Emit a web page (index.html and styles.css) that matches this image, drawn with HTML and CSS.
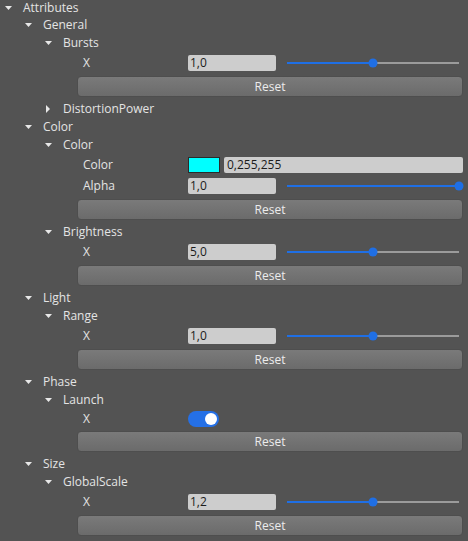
FILE: index.html
```html
<!DOCTYPE html>
<html>
<head>
<meta charset="utf-8">
<link rel="stylesheet" href="styles.css">
</head>
<body>
<div class="tree">
  <div class="hdr root"><span class="arr"><svg width="7" height="4" viewBox="0 0 7 4"><polygon points="0,0 7,0 3.5,4" fill="#e8e8e8"/></svg></span><span>Attributes</span></div>
  <div class="children">
    <div class="hdr"><span class="arr"><svg width="7" height="4" viewBox="0 0 7 4"><polygon points="0,0 7,0 3.5,4" fill="#e8e8e8"/></svg></span><span>General</span></div>
    <div class="children">
      <div class="hdr"><span class="arr"><svg width="7" height="4" viewBox="0 0 7 4"><polygon points="0,0 7,0 3.5,4" fill="#e8e8e8"/></svg></span><span>Bursts</span></div>
      <div class="children">
        <div class="props">
          <div class="row">
            <span class="lbl">X</span>
            <div class="val"><span class="field num">1,0</span><div class="slider"><div class="track" style="--p:50%"><span class="thumb"></span></div></div></div>
          </div>
          <div class="btn">Reset</div>
        </div>
      </div>
      <div class="hdr"><span class="arr"><svg width="4" height="8" viewBox="0 0 4 8" class="right"><polygon points="0,0 4,4 0,8" fill="#e8e8e8"/></svg></span><span>DistortionPower</span></div>
    </div>
    <div class="hdr"><span class="arr"><svg width="7" height="4" viewBox="0 0 7 4"><polygon points="0,0 7,0 3.5,4" fill="#e8e8e8"/></svg></span><span>Color</span></div>
    <div class="children">
      <div class="hdr"><span class="arr"><svg width="7" height="4" viewBox="0 0 7 4"><polygon points="0,0 7,0 3.5,4" fill="#e8e8e8"/></svg></span><span>Color</span></div>
      <div class="children">
        <div class="props">
          <div class="row">
            <span class="lbl">Color</span>
            <div class="val"><span class="swatch"></span><span class="field wide">0,255,255</span></div>
          </div>
          <div class="row">
            <span class="lbl">Alpha</span>
            <div class="val"><span class="field num">1,0</span><div class="slider"><div class="track" style="--p:100%"><span class="thumb"></span></div></div></div>
          </div>
          <div class="btn">Reset</div>
        </div>
      </div>
      <div class="hdr"><span class="arr"><svg width="7" height="4" viewBox="0 0 7 4"><polygon points="0,0 7,0 3.5,4" fill="#e8e8e8"/></svg></span><span>Brightness</span></div>
      <div class="children">
        <div class="props">
          <div class="row">
            <span class="lbl">X</span>
            <div class="val"><span class="field num">5,0</span><div class="slider"><div class="track" style="--p:50%"><span class="thumb"></span></div></div></div>
          </div>
          <div class="btn">Reset</div>
        </div>
      </div>
    </div>
    <div class="hdr"><span class="arr"><svg width="7" height="4" viewBox="0 0 7 4"><polygon points="0,0 7,0 3.5,4" fill="#e8e8e8"/></svg></span><span>Light</span></div>
    <div class="children">
      <div class="hdr"><span class="arr"><svg width="7" height="4" viewBox="0 0 7 4"><polygon points="0,0 7,0 3.5,4" fill="#e8e8e8"/></svg></span><span>Range</span></div>
      <div class="children">
        <div class="props">
          <div class="row">
            <span class="lbl">X</span>
            <div class="val"><span class="field num">1,0</span><div class="slider"><div class="track" style="--p:50%"><span class="thumb"></span></div></div></div>
          </div>
          <div class="btn">Reset</div>
        </div>
      </div>
    </div>
    <div class="hdr"><span class="arr"><svg width="7" height="4" viewBox="0 0 7 4"><polygon points="0,0 7,0 3.5,4" fill="#e8e8e8"/></svg></span><span>Phase</span></div>
    <div class="children">
      <div class="hdr"><span class="arr"><svg width="7" height="4" viewBox="0 0 7 4"><polygon points="0,0 7,0 3.5,4" fill="#e8e8e8"/></svg></span><span>Launch</span></div>
      <div class="children">
        <div class="props">
          <div class="row bool">
            <span class="lbl">X</span>
            <div class="val"><span class="toggle"><span class="knob"></span></span></div>
          </div>
          <div class="btn">Reset</div>
        </div>
      </div>
    </div>
    <div class="hdr"><span class="arr"><svg width="7" height="4" viewBox="0 0 7 4"><polygon points="0,0 7,0 3.5,4" fill="#e8e8e8"/></svg></span><span>Size</span></div>
    <div class="children">
      <div class="hdr"><span class="arr"><svg width="7" height="4" viewBox="0 0 7 4"><polygon points="0,0 7,0 3.5,4" fill="#e8e8e8"/></svg></span><span>GlobalScale</span></div>
      <div class="children">
        <div class="props">
          <div class="row">
            <span class="lbl">X</span>
            <div class="val"><span class="field num">1,2</span><div class="slider"><div class="track" style="--p:50%"><span class="thumb"></span></div></div></div>
          </div>
          <div class="btn">Reset</div>
        </div>
      </div>
    </div>
  </div>
  <div class="props outer">
    <div class="btn"></div>
  </div>
</div>
</body>
</html>
```
FILE: styles.css
```css
html, body {
  margin: 0;
  padding: 0;
}
body {
  background: #535353;
  font-family: "Open Sans", "Noto Sans", sans-serif;
  font-size: 12px;
  color: #e4e4e4;
  height: 541px;
  overflow: hidden;
}
.tree {
  display: flex;
  flex-direction: column;
}
.hdr {
  height: 18px;
  display: flex;
  align-items: center;
  padding-left: 5px;
  line-height: 18px;
  white-space: nowrap;
}
.hdr.root {
  height: 16px;
  line-height: 16px;
}
.arr {
  width: 18px;
  flex: none;
  display: flex;
  align-items: center;
  height: 100%;
}
.arr svg {
  display: block;
}
.arr svg.right {
  margin-left: 1px;
}
.children {
  padding-left: 20px;
  display: flex;
  flex-direction: column;
}
.props {
  margin-left: 17px;
  margin-right: 5px;
  display: flex;
  flex-direction: column;
}
.props.outer {
  margin-left: 38px;
}
.row {
  height: 21px;
  box-sizing: border-box;
  padding-top: 3px;
  display: grid;
  grid-template-columns: 111px 1fr;
  align-items: start;
}
.row.bool {
  height: 19px;
  padding-top: 2px;
}
.lbl {
  padding-left: 6px;
  line-height: 16px;
}
.val {
  display: flex;
  align-items: center;
  height: 16px;
}
.field {
  height: 16px;
  line-height: 16px;
  background: #cdcdcd;
  color: #1c1c1c;
  border-radius: 2px;
  padding-left: 2px;
  box-sizing: border-box;
}
.field.num {
  width: 88px;
  flex: none;
}
.field.wide {
  flex: 1;
  padding-left: 3px;
}
.slider {
  flex: 1;
  margin-left: 7px;
  padding: 0 4px;
  height: 16px;
  display: flex;
  align-items: center;
}
.track {
  position: relative;
  width: 100%;
  height: 2px;
  background: linear-gradient(to right, #1f6fe5 var(--p), #9b9b9b var(--p));
}
.thumb {
  position: absolute;
  top: 50%;
  left: var(--p);
  width: 9px;
  height: 9px;
  border-radius: 50%;
  background: #1f6fe5;
  transform: translate(-50%, -50%);
}
.swatch {
  width: 32px;
  height: 16px;
  flex: none;
  box-sizing: border-box;
  border: 1px solid #2b2b2b;
  background: #00ffff;
  margin-right: 4px;
}
.toggle {
  width: 31px;
  height: 16px;
  border-radius: 8px;
  background: #2570e6;
  display: flex;
  align-items: center;
  justify-content: flex-end;
  padding-right: 2px;
  box-sizing: border-box;
}
.knob {
  width: 12px;
  height: 12px;
  border-radius: 50%;
  background: #ffffff;
}
.btn {
  height: 21px;
  margin: 3px 0;
  box-sizing: border-box;
  border: 1px solid #4e4e4e;
  border-radius: 4px;
  background: linear-gradient(#7a7a7a, #6b6b6b);
  color: #ececec;
  text-align: center;
  line-height: 19px;
}
```
